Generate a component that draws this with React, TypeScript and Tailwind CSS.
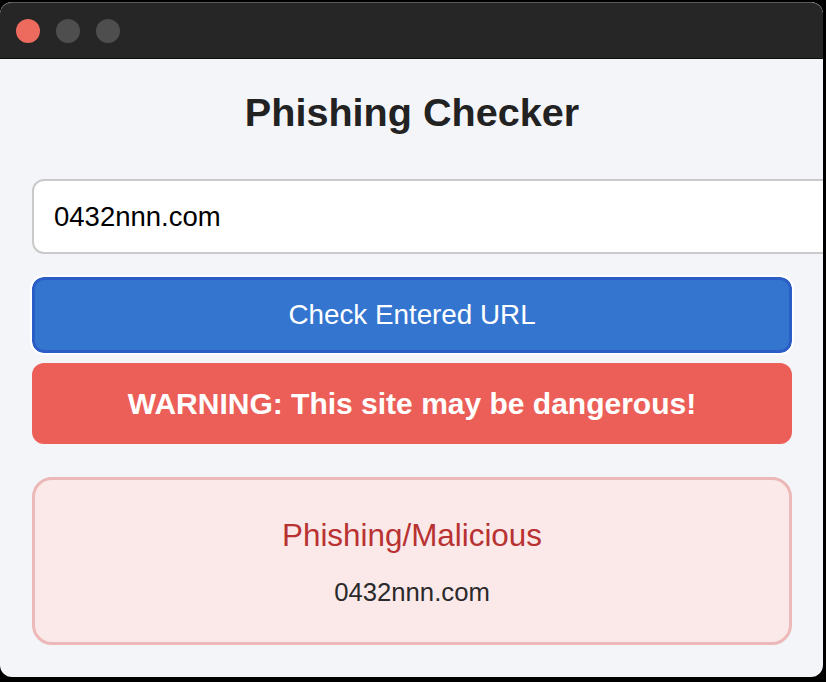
import { useState } from "react";

export default function App() {
  const [url, setUrl] = useState("0432nnn.com");

  return (
    <div className="h-[682px] w-[826px] overflow-hidden bg-black pt-[2px] font-['Liberation_Sans',Arial,sans-serif]">
      <div className="flex h-[675px] w-[823px] flex-col overflow-hidden rounded-[12px] bg-[#f4f5f9]">
        <div className="flex h-[57px] shrink-0 items-center gap-4 rounded-t-[12px] border-t border-b border-t-[#5a5a5a] border-b-[#0e0e0e] bg-[#262626] pl-4">
          <span className="h-6 w-6 rounded-full bg-[#ed6a5e]" />
          <span className="h-6 w-6 rounded-full bg-[#4e4e4e]" />
          <span className="h-6 w-6 rounded-full bg-[#4e4e4e]" />
        </div>

        <main className="flex flex-col pl-[32px] pr-[31px]">
          <h1 className="mt-[30px] text-center text-[39.6px] leading-[46px] font-bold text-[#222]">Phishing Checker</h1>

          <input
            className="mt-[44px] h-[75px] w-[820px] shrink-0 rounded-[12px] border-2 border-[#cacaca] bg-white pl-5 text-[27.5px] text-black outline-none"
            value={url}
            onChange={(event) => setUrl(event.target.value)}
          />

          <button className="mt-[23px] h-[76px] rounded-[12px] border-[3px] border-[#2a5dc6] bg-[#3375cf] text-[27.8px] text-white outline-2 outline-white">
            Check Entered URL
          </button>

          <div className="mt-[10px] flex h-[81px] items-center justify-center rounded-[12px] bg-[#eb5f58] text-[30px] font-bold text-white">
            WARNING: This site may be dangerous!
          </div>

          <section className="mt-[33px] flex h-[168px] flex-col items-center rounded-[20px] border-[3px] border-[#ecb8b8] bg-[#fbe9ea] pt-[38px]">
            <p className="text-[31.4px] leading-[36px] text-[#b83232]">Phishing/Malicious</p>
            <p className="mt-[23px] text-[25.7px] leading-[30px] text-[#2a2a2a]">{url}</p>
          </section>
        </main>
      </div>
    </div>
  );
}
